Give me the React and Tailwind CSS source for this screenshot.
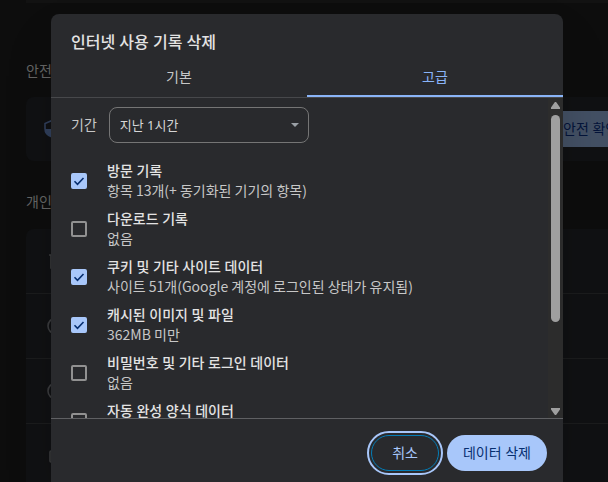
import { useState } from 'react';

const TIME_RANGES = ['지난 1시간', '지난 24시간', '지난 7일', '지난 4주', '전체 기간'];

const DATA_TYPES = [
  { id: 'history',   title: '방문 기록',                     detail: '항목 13개(+ 동기화된 기기의 항목)', checked: true },
  { id: 'downloads', title: '다운로드 기록',                 detail: '없음', checked: false },
  { id: 'cookies',   title: '쿠키 및 기타 사이트 데이터',    detail: '사이트 51개(Google 계정에 로그인된 상태가 유지됨)', checked: true },
  { id: 'cache',     title: '캐시된 이미지 및 파일',         detail: '362MB 미만', checked: true },
  { id: 'passwords', title: '비밀번호 및 기타 로그인 데이터', detail: '없음', checked: false },
  { id: 'autofill',  title: '자동 완성 양식 데이터',         detail: '없음', checked: false },
];

/* ───── Settings page behind the dialog ───── */
const RowIcon = ({ kind }) => (
  <svg viewBox="0 0 20 20" className="size-5 shrink-0" fill="none" stroke="#3a3b3d" strokeWidth="1.6">
    {kind === 'trash' && <path d="M3 4h13M5 4v13h9V4M7 2h5" />}
    {kind === 'round' && <circle cx="10" cy="10" r="8" />}
    {kind === 'lock' && <rect x="4" y="4" width="13" height="11" rx="1" />}
  </svg>
);

const SettingsPage = () => (
  <div aria-hidden="true" className="h-full bg-[#0d0d0d] pl-[26px] text-[#656565]">
    <div className="h-[3px] bg-[#121212]" />
    <h2 className="pt-[57px] pb-4 text-sm leading-[21px]">안전 확인</h2>
    <section className="flex h-16 items-center justify-between rounded-l-lg bg-[#101113] pl-4">
      <svg viewBox="0 0 20 20" className="size-5 text-[#303f5b]">
        <path d="M10 1.500 3 4.500V9.500c0 4 3 7.300 7 8.500 4-1.200 7-4.500 7-8.500V4.500z" fill="none" stroke="currentColor" strokeWidth="1.600" />
        <path d="M3 10h14c-.3 4-3.200 7-7 8-3.800-1-6.700-4-7-8z" fill="currentColor" />
      </svg>
      <button tabIndex={-1} className="h-9 w-[60px] overflow-hidden bg-[#435064] pl-[15px] text-left text-sm whitespace-nowrap text-[#04143a]">
        안전 확인
      </button>
    </section>
    <h2 className="pt-[30px] pb-4 text-sm leading-[22px]">개인 정보 보호</h2>
    <section className="divide-y divide-[#1b1c1d] rounded-tl-lg bg-[#101113]">
      {['trash', 'round', 'round', 'lock'].map((kind, i) => (
        <div key={i} className="flex h-[65px] items-center pl-5">
          <RowIcon kind={kind} />
        </div>
      ))}
    </section>
  </div>
);

/* ───── Dialog parts ───── */
const DataTypeRow = ({ id, title, detail, checked, onToggle }) => (
  <li>
    <label htmlFor={id} className="flex h-12 items-start gap-5">
      <span className="mt-4 grid size-4 shrink-0">
        <input
          id={id}
          type="checkbox"
          checked={checked}
          onChange={onToggle}
          className="peer col-start-1 row-start-1 size-4 appearance-none rounded-xs border-2 border-[#919191] checked:border-[#a8c7fa] checked:bg-[#a8c7fa]"
        />
        <svg viewBox="0 0 16 16" className="pointer-events-none invisible col-start-1 row-start-1 size-4 peer-checked:visible" fill="none" stroke="#062e6f" strokeWidth="1.6">
          <path d="m3.500 8.300 3 3 6-6.300" />
        </svg>
      </span>
      <span className="flex flex-col pt-1 text-sm whitespace-nowrap">
        <span className="leading-5 font-medium text-[#e3e3e3]">{title}</span>
        <span className="font-['Noto_Sans_CJK_KR',sans-serif] leading-[18px] text-[#c7c7c7]">{detail}</span>
      </span>
    </label>
  </li>
);

const ScrollBar = () => (
  <div aria-hidden="true" className="flex w-[15px] shrink-0 flex-col items-center bg-[#2c2c2c] pt-1 pb-[3px]">
    <svg viewBox="0 0 9 7" className="h-[7px] w-[9px]" fill="#9f9f9f">
      <path d="M3.500.6a1.200 1.200 0 0 1 2 0L9 5.500V7H0V5.500z" />
    </svg>
    <div className="flex w-full flex-1 flex-col items-center py-1.5">
      <div className="h-[72%] w-[9px] rounded-full bg-[#9f9f9f]" />
    </div>
    <svg viewBox="0 0 9 7" className="h-[7px] w-[9px]" fill="#9f9f9f">
      <path d="M3.500 6.400a1.200 1.200 0 0 0 2 0L9 1.500V0H0v1.500z" />
    </svg>
  </div>
);

const App = () => {
  const [tab, setTab] = useState('advanced');
  const [range, setRange] = useState(TIME_RANGES[0]);
  const [items, setItems] = useState(DATA_TYPES);

  const toggle = (id) =>
    setItems(items.map((item) => (item.id === id ? { ...item, checked: !item.checked } : item)));

  return (
    <div className="relative h-screen overflow-hidden font-['Noto_Sans','Noto_Sans_CJK_KR',sans-serif]">
      <SettingsPage />

      <div className="absolute inset-0 flex justify-center pt-3.5 pr-0.5 pl-2">
        <div
          role="dialog"
          aria-labelledby="dialog-title"
          className="flex h-full w-full max-w-lg flex-col rounded-t-lg bg-[#292a2d] shadow-2xl"
        >
          <h1 id="dialog-title" className="px-5 pt-4 text-base leading-6 font-medium text-[#e3e3e3]">
            인터넷 사용 기록 삭제
          </h1>

          {/* Tabs */}
          <div role="tablist" className="grid grid-cols-2 border-b border-[#47484b] text-sm">
            {[['basic', '기본'], ['advanced', '고급']].map(([key, label]) => (
              <button
                key={key}
                role="tab"
                aria-selected={tab === key}
                onClick={() => setTab(key)}
                className={`h-[43px] border-b-2 pt-1 ${
                  tab === key ? 'border-[#8ab4f8] text-[#8ab4f8]' : 'border-transparent text-[#c7c7c7]'
                }`}
              >
                {label}
              </button>
            ))}
          </div>

          {/* Scrolling body */}
          <div className="flex min-h-0 flex-1">
            <div className="min-w-0 flex-1 overflow-hidden px-5 pt-[9px]">
              <div className="flex items-center gap-3 text-sm text-[#c7c7c7]">
                <label htmlFor="time-range">기간</label>
                <div className="grid w-[200px] items-center">
                  <select
                    id="time-range"
                    value={range}
                    onChange={(e) => setRange(e.target.value)}
                    className="col-start-1 row-start-1 h-9 appearance-none rounded-lg border border-[#757575] bg-transparent px-2.5 text-[13px] text-[#d6d6d6]"
                  >
                    {TIME_RANGES.map((label) => (
                      <option key={label}>{label}</option>
                    ))}
                  </select>
                  <svg viewBox="0 0 8 4" className="pointer-events-none col-start-1 row-start-1 mr-2.5 h-1 w-2 justify-self-end" fill="#9aa0a6">
                    <path d="M0 0h8L4 4z" />
                  </svg>
                </div>
              </div>

              <ul className="pt-3.5">
                {items.map((item) => (
                  <DataTypeRow key={item.id} {...item} onToggle={() => toggle(item.id)} />
                ))}
              </ul>
            </div>
            <ScrollBar />
          </div>

          {/* Actions */}
          <div className="flex justify-end gap-2 border-t border-[#5f6063] p-4 pb-[11px] text-sm">
            <button className="h-9 rounded-full border border-[#047db7] px-5 text-[#a8c7fa] outline-2 outline-offset-2 outline-[#a8c7fa]">
              취소
            </button>
            <button className="h-9 rounded-full bg-[#a8c7fa] px-4 text-[#062e6f]">데이터 삭제</button>
          </div>
        </div>
      </div>
    </div>
  );
};

export default App;
